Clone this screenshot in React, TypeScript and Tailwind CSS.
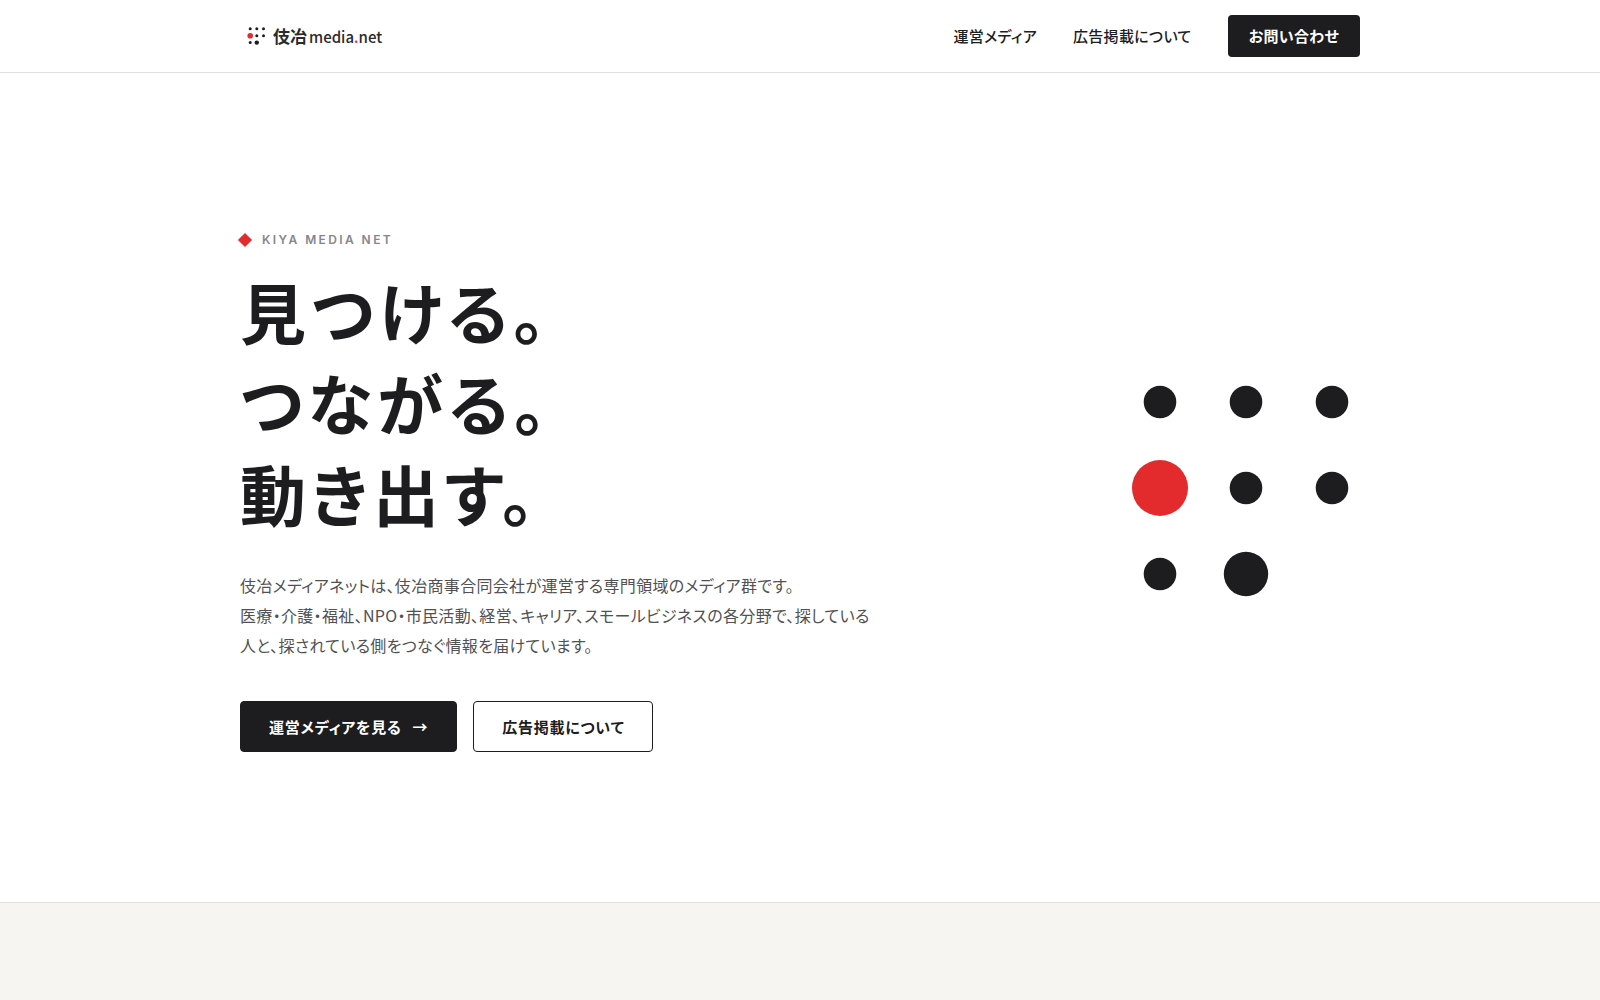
interface Dot {
  cx: number;
  cy: number;
  r: number;
  accent?: boolean;
}

interface DotMarkProps {
  dots: Dot[];
  viewBox: string;
  className: string;
}

const heroDots: Dot[] = [
  { cx: 28, cy: 28, r: 16.3 },
  { cx: 114, cy: 28, r: 16.3 },
  { cx: 200, cy: 28, r: 16.3 },
  { cx: 28, cy: 114, r: 28, accent: true },
  { cx: 114, cy: 114, r: 16.3 },
  { cx: 200, cy: 114, r: 16.3 },
  { cx: 28, cy: 200, r: 16.3 },
  { cx: 114, cy: 200, r: 22.2 },
];

// small sizes need heavier dots to stay readable
const logoDots: Dot[] = [
  { cx: 3.2, cy: 2.8, r: 1.5 },
  { cx: 9.8, cy: 2.8, r: 1.5 },
  { cx: 16.5, cy: 2.8, r: 1.5 },
  { cx: 3.2, cy: 9.7, r: 2.8, accent: true },
  { cx: 9.8, cy: 9.7, r: 1.5 },
  { cx: 16.5, cy: 9.7, r: 1.5 },
  { cx: 3.2, cy: 16.6, r: 1.5 },
  { cx: 9.8, cy: 16.6, r: 2.2 },
];

const navLinks = [
  { label: '運営メディア', href: '#media' },
  { label: '広告掲載について', href: '#ads' },
];

function DotMark({ dots, viewBox, className }: DotMarkProps) {
  return (
    <svg viewBox={viewBox} className={className} aria-hidden="true">
      {dots.map((dot) => (
        <circle
          key={`${dot.cx}-${dot.cy}`}
          cx={dot.cx}
          cy={dot.cy}
          r={dot.r}
          fill={dot.accent ? '#e32a2d' : '#1d1d1f'}
        />
      ))}
    </svg>
  );
}

function Header() {
  return (
    <header className="border-b border-[#e0dfdb] bg-white">
      <div className="mx-auto flex h-[72px] max-w-[1168px] items-center justify-between px-6">
        <a href="/" className="flex items-center gap-[6px] pl-[7px] tracking-normal text-[#2b2b2d]">
          <DotMark dots={logoDots} viewBox="0 0 20 20" className="h-5 w-5" />
          <span className="flex items-baseline gap-[2px] leading-6">
            <span className="text-[17px] font-bold">伎冶</span>
            <span className="text-[15px] font-medium">
              media<span className="text-[#e32a2d]">.</span>net
            </span>
          </span>
        </a>

        <nav className="flex items-center gap-9 text-[15px] font-medium">
          {navLinks.map((link) => (
            <a key={link.href} href={link.href}>
              {link.label}
            </a>
          ))}
          <a
            href="#contact"
            className="rounded bg-[#1d1d1f] px-[21px] py-[9px] leading-6 font-bold text-white"
          >
            お問い合わせ
          </a>
        </nav>
      </div>
    </header>
  );
}

function Hero() {
  return (
    <section className="border-b border-[#e0dfdb] bg-white">
      <div className="mx-auto flex max-w-[1168px] items-center justify-between gap-16 px-6 py-[150px]">
        <div>
          <p className="flex items-center gap-3 font-['Inter','Noto_Sans_CJK_JP',sans-serif] text-xs leading-[34px] font-semibold tracking-[0.2em] text-[#86868b]">
            <span className="h-[10px] w-[10px] rotate-45 bg-[#e32a2d]"></span>
            KIYA MEDIA NET
          </p>

          <h1 className="mt-2 text-[66px] leading-[91px] font-bold tracking-[5px]">
            見つける。
            <br />
            つながる。
            <br />
            動き出す。
          </h1>

          <p className="mt-8 max-w-[640px] text-base leading-[30px] text-[#515154]">
            伎冶メディアネットは、伎冶商事合同会社が運営する専門領域のメディア群です。
            <br />
            医療・介護・福祉、NPO・市民活動、経営、キャリア、スモールビジネスの各分野で、探している人と、探されている側をつなぐ情報を届けています。
          </p>

          <div className="mt-[41px] flex gap-4 text-[15px] leading-[25px] font-bold tracking-wider">
            <a
              href="#media"
              className="flex items-center gap-[11px] rounded border border-[#1d1d1f] bg-[#1d1d1f] px-7 py-3 text-white"
            >
              運営メディアを見る
              <span aria-hidden="true">→</span>
            </a>
            <a href="#ads" className="rounded border border-[#1d1d1f] px-7 py-3">
              広告掲載について
            </a>
          </div>
        </div>

        <DotMark dots={heroDots} viewBox="0 0 228 228" className="h-[228px] w-[228px] shrink-0" />
      </div>
    </section>
  );
}

export default function App() {
  return (
    <div className="min-h-screen bg-[#f6f5f1] font-['Noto_Sans_CJK_JP',sans-serif] tracking-[0.02em] text-[#1d1d1f] [font-feature-settings:'palt']">
      <Header />
      <main>
        <Hero />
      </main>
    </div>
  );
}
